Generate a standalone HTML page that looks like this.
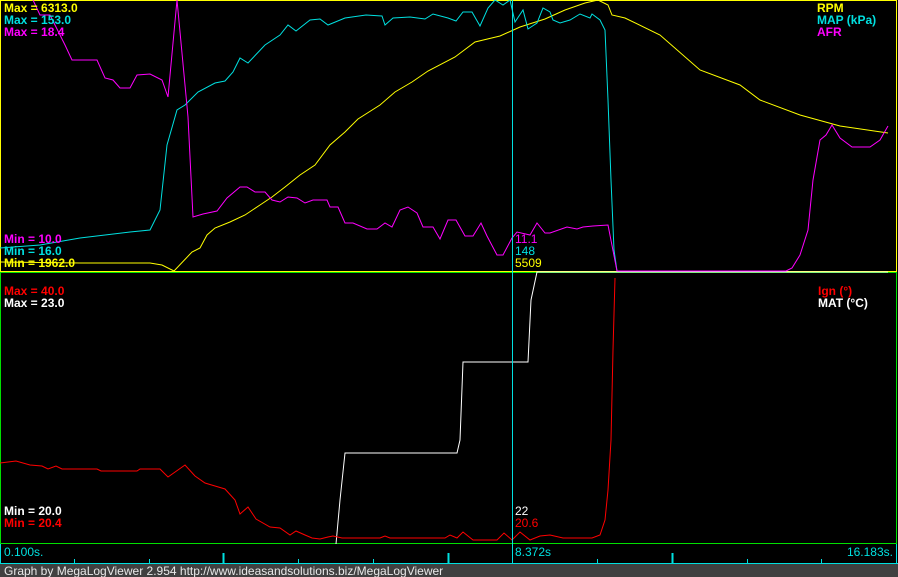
<!DOCTYPE html>
<html><head><style>
html,body{margin:0;padding:0;background:#000;width:898px;height:577px;overflow:hidden}
svg{display:block}
text{font-family:"Liberation Sans",sans-serif;font-size:12px;font-weight:bold}
</style></head><body>
<svg width="898" height="577" xmlns="http://www.w3.org/2000/svg">
<rect width="898" height="577" fill="#000"/>
<rect x="0.5" y="0.5" width="896" height="271" fill="none" stroke="#ffff00"/>
<rect x="0.5" y="272.5" width="896" height="271" fill="none" stroke="#00e000"/>
<line x1="0" y1="563.5" x2="898" y2="563.5" stroke="#00e0e0"/>
<line x1="0.5" y1="544" x2="0.5" y2="564" stroke="#00e0e0"/>
<line x1="896.5" y1="544" x2="896.5" y2="564" stroke="#00e0e0"/>
<g stroke="#00e0e0" stroke-width="1">
<line x1="74.5" y1="559" x2="74.5" y2="563"/><line x1="149.5" y1="559" x2="149.5" y2="563"/>
<line x1="223.5" y1="553" x2="223.5" y2="563" stroke-width="2"/>
<line x1="298.5" y1="559" x2="298.5" y2="563"/><line x1="373.5" y1="559" x2="373.5" y2="563"/>
<line x1="448.5" y1="553" x2="448.5" y2="563" stroke-width="2"/>
<line x1="597.5" y1="559" x2="597.5" y2="563"/>
<line x1="672.5" y1="553" x2="672.5" y2="563" stroke-width="2"/>
<line x1="747.5" y1="559" x2="747.5" y2="563"/><line x1="821.5" y1="559" x2="821.5" y2="563"/>
</g>
<rect x="0" y="564" width="898" height="13" fill="#404040"/>
<text x="4" y="575" fill="#e8e8e8" style="font-weight:normal;font-size:12px">Graph by MegaLogViewer 2.954 http://www.ideasandsolutions.biz/MegaLogViewer</text>

<!-- RPM -->
<polyline fill="none" stroke="#ffff00" points="0,262 80,263 150,263 162,265 174,271 192,252 200,248 207,235 215,228 230,222 245,215 260,205 272,197 285,187 300,175 315,165 330,145 345,132 358,119 380,105 395,92 412,82 428,71 455,57 475,42 500,36 520,27 545,19 565,10 585,3 598,0 608,5 612,15 625,18 660,35 700,70 740,85 760,100 800,115 840,126 888,133"/>
<!-- MAP -->
<polyline fill="none" stroke="#00e0e0" points="0,248 40,245 80,238 130,232 150,230 160,210 167,145 177,110 185,105 198,92 215,83 225,81 233,72 240,58 248,63 265,45 280,35 288,25 296,31 310,20 320,19 328,25 345,18 366,15 382,16 385,25 393,18 410,17 425,19 433,14 448,18 456,21 463,12 472,12 480,26 488,8 495,0 503,5 510,0 515,22 523,10 528,29 537,23 543,8 550,12 553,20 560,23 570,20 580,14 590,18 592,14 600,20 605,30 608,100 611,180 614,250 617,271"/>
<!-- AFR -->
<polyline fill="none" stroke="#ff00ff" points="33,0 40,15 50,15 65,45 72,60 97,60 105,78 113,80 120,88 130,88 137,75 150,74 162,80 168,97 177,0 188,117 193,217 203,214 217,211 227,198 240,187 247,187 255,192 265,192 272,200 280,202 288,197 297,198 305,203 313,200 320,200 327,200 330,207 338,207 345,223 353,223 367,229 377,229 385,223 392,227 400,210 408,207 417,213 423,227 433,227 440,239 448,220 456,220 465,236 473,236 481,223 487,236 497,255 503,255 512,238 517,232 530,235 537,223 545,233 550,233 567,227 577,229 583,227 593,226 608,225 617,271 786,271 792,268 800,255 808,230 813,180 820,140 826,135 832,125 840,138 852,147 870,147 880,140 888,126"/>
<!-- MAT -->
<polyline fill="none" stroke="#ffffff" points="336,544 340,500 345,453 457,453 460,440 463,362 528,362 531,300 537,272 888,272"/>
<!-- Ign -->
<polyline fill="none" stroke="#ff0000" points="0,463 16,461 30,465 42,466 48,469 56,466 62,469 97,469 101,471 137,471 140,469 160,469 168,477 185,465 195,476 205,483 215,486 225,489 235,500 240,514 248,507 256,519 270,527 280,528 290,535 296,531 305,535 312,538 320,539 328,537 333,536 342,538 380,538 385,536 390,538 445,538 450,535 457,538 463,532 473,540 497,540 504,533 512,540 520,532 530,540 540,536 550,535 563,538 592,538 600,535 605,520 608,490 611,440 613,350 615,278"/>
<line x1="512.5" y1="0" x2="512.5" y2="563" stroke="#00e0e0"/>

<text x="4" y="12" fill="#ffff00">Max = 6313.0</text>
<text x="4" y="24" fill="#00e0e0">Max = 153.0</text>
<text x="4" y="36" fill="#ff00ff">Max = 18.4</text>
<text x="4" y="243" fill="#ff00ff">Min = 10.0</text>
<text x="4" y="255" fill="#00e0e0">Min = 16.0</text>
<text x="4" y="267" fill="#ffff00">Min = 1962.0</text>
<text x="817" y="12" fill="#ffff00">RPM</text>
<text x="817" y="24" fill="#00e0e0">MAP (kPa)</text>
<text x="817" y="36" fill="#ff00ff">AFR</text>
<text x="515" y="243" fill="#ff00ff" style="font-weight:normal">11.1</text>
<text x="515" y="255" fill="#00e0e0" style="font-weight:normal">148</text>
<text x="515" y="267" fill="#ffff00" style="font-weight:normal">5509</text>

<text x="4" y="295" fill="#ff0000">Max = 40.0</text>
<text x="4" y="307" fill="#ffffff">Max = 23.0</text>
<text x="818" y="295" fill="#ff0000">Ign (°)</text>
<text x="818" y="307" fill="#ffffff">MAT (°C)</text>
<text x="4" y="515" fill="#ffffff">Min = 20.0</text>
<text x="4" y="527" fill="#ff0000">Min = 20.4</text>
<text x="515" y="515" fill="#ffffff" style="font-weight:normal">22</text>
<text x="515" y="527" fill="#ff0000" style="font-weight:normal">20.6</text>

<text x="4" y="556" fill="#00e0e0" style="font-weight:normal">0.100s.</text>
<text x="515" y="556" fill="#00e0e0" style="font-weight:normal">8.372s</text>
<text x="893" y="556" fill="#00e0e0" style="font-weight:normal" text-anchor="end">16.183s.</text>
</svg>
</body></html>
